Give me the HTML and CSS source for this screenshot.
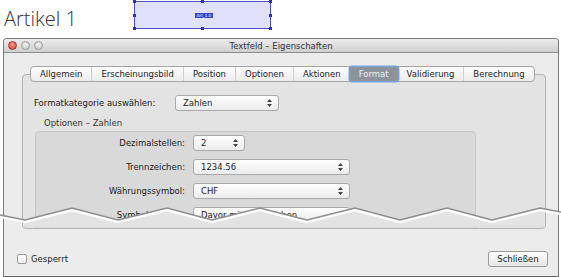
FILE: index.html
```html
<!DOCTYPE html>
<html lang="de">
<head>
  <meta charset="UTF-8" />
  <title>Textfeld – Eigenschaften</title>
  <link rel="stylesheet" href="styles.css">
</head>
<body>
  <div class="page">
    <div class="doc">
      <div class="doc-title">Artikel 1</div>
      <div class="field-sel">
        <span class="handle h-tl"></span><span class="handle h-tc"></span><span class="handle h-tr"></span>
        <span class="handle h-ml"></span><span class="handle h-mr"></span>
        <span class="handle h-bl"></span><span class="handle h-bc"></span><span class="handle h-br"></span>
        <span class="field-tag">Art_1.0</span>
      </div>
    </div>

    <div class="window">
      <div class="titlebar">
        <div class="lights">
          <span class="light close"></span>
          <span class="light"></span>
          <span class="light"></span>
        </div>
        <div class="wtitle">Textfeld – Eigenschaften</div>
      </div>

      <div class="wbody">
        <div class="tabs">
          <span class="tab">Allgemein</span>
          <span class="tab">Erscheinungsbild</span>
          <span class="tab">Position</span>
          <span class="tab">Optionen</span>
          <span class="tab">Aktionen</span>
          <span class="tab active">Format</span>
          <span class="tab">Validierung</span>
          <span class="tab">Berechnung</span>
        </div>

        <div class="panel">
          <div class="cat-row">
            <span class="cat-label">Formatkategorie auswählen:</span>
            <div class="popup w-cat">Zahlen<svg class="arrows" width="5" height="8" viewBox="0 0 5 8"><path d="M2.5 0L5 3H0z M2.5 8L5 5H0z" fill="#444"/></svg></div>
          </div>

          <div class="group-title">Optionen – Zahlen</div>
          <div class="group">
            <div class="grow">
              <span class="glabel">Dezimalstellen:</span>
              <div class="popup w-small">2<svg class="arrows" width="5" height="8" viewBox="0 0 5 8"><path d="M2.5 0L5 3H0z M2.5 8L5 5H0z" fill="#444"/></svg></div>
            </div>
            <div class="grow">
              <span class="glabel">Trennzeichen:</span>
              <div class="popup w-wide">1234.56<svg class="arrows" width="5" height="8" viewBox="0 0 5 8"><path d="M2.5 0L5 3H0z M2.5 8L5 5H0z" fill="#444"/></svg></div>
            </div>
            <div class="grow">
              <span class="glabel">Währungssymbol:</span>
              <div class="popup w-wide">CHF<svg class="arrows" width="5" height="8" viewBox="0 0 5 8"><path d="M2.5 0L5 3H0z M2.5 8L5 5H0z" fill="#444"/></svg></div>
            </div>
            <div class="grow">
              <span class="glabel">Symbolposition:</span>
              <div class="popup w-wide">Davor mit Leerzeichen<svg class="arrows" width="5" height="8" viewBox="0 0 5 8"><path d="M2.5 0L5 3H0z M2.5 8L5 5H0z" fill="#444"/></svg></div>
            </div>
          </div>
        </div>

        <div class="footer">
          <label class="check"><span class="box"></span>Gesperrt</label>
          <span class="button">Schließen</span>
        </div>
      </div>
    </div>

    <!-- abgerissene Kante -->
    <svg class="tear" width="561" height="30" viewBox="0 0 561 30">
      <defs>
        <clipPath id="below">
          <polygon points="0,15 25,20 72,8 118,20 167,8 212,20 260,8 307,20 355,8 400,20 447,8 492,20 540,8 561,12 561,30 0,30"/>
        </clipPath>
      </defs>
      <rect x="23" y="0" width="522" height="27" fill="#e3e3e3" clip-path="url(#below)"/>
      <polyline points="0,17 25,22 72,10 118,22 167,10 212,22 260,10 307,22 355,10 400,22 447,10 492,22 540,10 561,14" fill="none" stroke="#fff" stroke-width="2.5"/>
      <polyline points="0,15 25,20 72,8 118,20 167,8 212,20 260,8 307,20 355,8 400,20 447,8 492,20 540,8 561,12" fill="none" stroke="#8e8e8e" stroke-width="1.3"/>
    </svg>
  </div>
</body>
</html>
```

FILE: styles.css
```css
* {
  margin: 0;
  padding: 0;
  box-sizing: border-box;
}

body {
  background: #fff;
  font-family: "DejaVu Sans", sans-serif;
  font-size: 8.5px;
  color: #222;
}

.page {
  position: relative;
  width: 561px;
  height: 277px;
  overflow: hidden;
}

/* Dokument oben */
.doc {
  height: 38px;
  display: grid;
  grid-template-columns: 134px 137px;
}

.doc-title {
  padding: 7px 0 0 4px;
  font-family: "Open Sans", sans-serif;
  font-weight: 300;
  font-size: 20px;
  line-height: 24px;
  color: #333;
}

.field-sel {
  position: relative;
  margin-top: 1px;
  height: 28px;
  background: #dfe2fa;
  border: 1px solid #4a50c8;
  display: flex;
  align-items: center;
  justify-content: center;
}

.handle {
  position: absolute;
  width: 3px;
  height: 3px;
  background: #2c34b0;
}
.h-tl { left: -2px; top: -2px; }
.h-tc { left: 66px; top: -2px; }
.h-tr { right: -2px; top: -2px; }
.h-ml { left: -2px; top: 12px; }
.h-mr { right: -2px; top: 12px; }
.h-bl { left: -2px; bottom: -2px; }
.h-bc { left: 66px; bottom: -2px; }
.h-br { right: -2px; bottom: -2px; }

.field-tag {
  background: #3247c9;
  color: #fff;
  font-size: 4px;
  line-height: 5px;
  padding: 0 2px;
  margin-left: 3px;
}

/* Fenster */
.window {
  margin-left: 3px;
  width: 556px;
  height: 239px;
  border: 1px solid #7a7a7a;
  border-bottom-color: #666;
  border-radius: 4px 4px 0 0;
  background: #ececec;
  overflow: hidden;
}

.titlebar {
  position: relative;
  height: 14px;
  background: linear-gradient(#ececec, #cfcfcf);
  border-bottom: 1px solid #8e8e8e;
  display: flex;
  align-items: center;
  justify-content: center;
}

.lights {
  position: absolute;
  left: 4px;
  top: 2px;
  display: flex;
  gap: 4px;
}

.light {
  width: 9px;
  height: 9px;
  border-radius: 50%;
  background: radial-gradient(circle at 50% 35%, #f4f4f4, #c4c4c4);
  border: 1px solid #9c9c9c;
}

.light.close {
  background: radial-gradient(circle at 50% 35%, #f59a92, #d8372e);
  border-color: #a8302a;
}

.wtitle {
  font-size: 8.5px;
  color: #333;
}

.wbody {
  padding-top: 13px;
}

/* Reiter */
.tabs {
  position: relative;
  z-index: 1;
  width: max-content;
  margin-left: 26px;
  height: 16px;
  display: flex;
  background: linear-gradient(#fdfdfd, #ececec);
  border: 1px solid #a6a6a6;
  border-radius: 4px;
}

.tab {
  padding: 0 9px;
  line-height: 14px;
  border-left: 1px solid #cfcfcf;
  color: #1e1e1e;
}

.tab:first-child {
  border-left: 0;
}

.tab.active {
  background: #8c939d;
  color: #eef0f3;
  border: 0;
  box-shadow: 0 0 0 1.5px #79a3dd;
  border-radius: 2px;
}

.tab.active + .tab {
  border-left: 0;
}

.panel {
  margin: -8px 0 0 18px;
  width: 524px;
  height: 155px;
  background: #e3e3e3;
  border: 1px solid #b3b3b3;
  border-radius: 4px;
  padding: 20px 0 0 11px;
  overflow: hidden;
}

.cat-row {
  display: flex;
  align-items: center;
}

.cat-label {
  width: 141px;
}

.popup {
  position: relative;
  height: 16px;
  line-height: 14px;
  padding-left: 7px;
  background: linear-gradient(#ffffff, #ebebeb);
  border: 1px solid #a9a9a9;
  border-radius: 3px;
  color: #1e1e1e;
}

.arrows {
  position: absolute;
  right: 6px;
  top: 3px;
}

.w-cat { width: 104px; }
.w-small { width: 52px; }
.w-wide { width: 157px; }

.group-title {
  margin: 6px 0 0 10px;
  line-height: 12px;
  color: #333;
}

.group {
  margin: 2px 0 0 1px;
  width: 441px;
  height: 120px;
  background: #d9d9d9;
  border: 1px solid #c6c6c6;
  border-radius: 4px;
  padding-top: 3px;
  display: flex;
  flex-direction: column;
  gap: 8px;
}

.grow {
  display: flex;
  align-items: center;
  gap: 8px;
}

.glabel {
  width: 149px;
  text-align: right;
}

/* unten */
.footer {
  margin-top: 22px;
  padding: 0 10px 0 13px;
  display: flex;
  justify-content: space-between;
  align-items: center;
}

.check {
  display: flex;
  align-items: center;
  gap: 4px;
}

.box {
  width: 10px;
  height: 10px;
  background: linear-gradient(#fff, #ececec);
  border: 1px solid #9d9d9d;
  border-radius: 2px;
}

.button {
  width: 60px;
  height: 16px;
  line-height: 14px;
  text-align: center;
  background: linear-gradient(#ffffff, #e6e6e6);
  border: 1px solid #999;
  border-radius: 3px;
}

.tear {
  position: absolute;
  left: 0;
  top: 200px;
}
```
